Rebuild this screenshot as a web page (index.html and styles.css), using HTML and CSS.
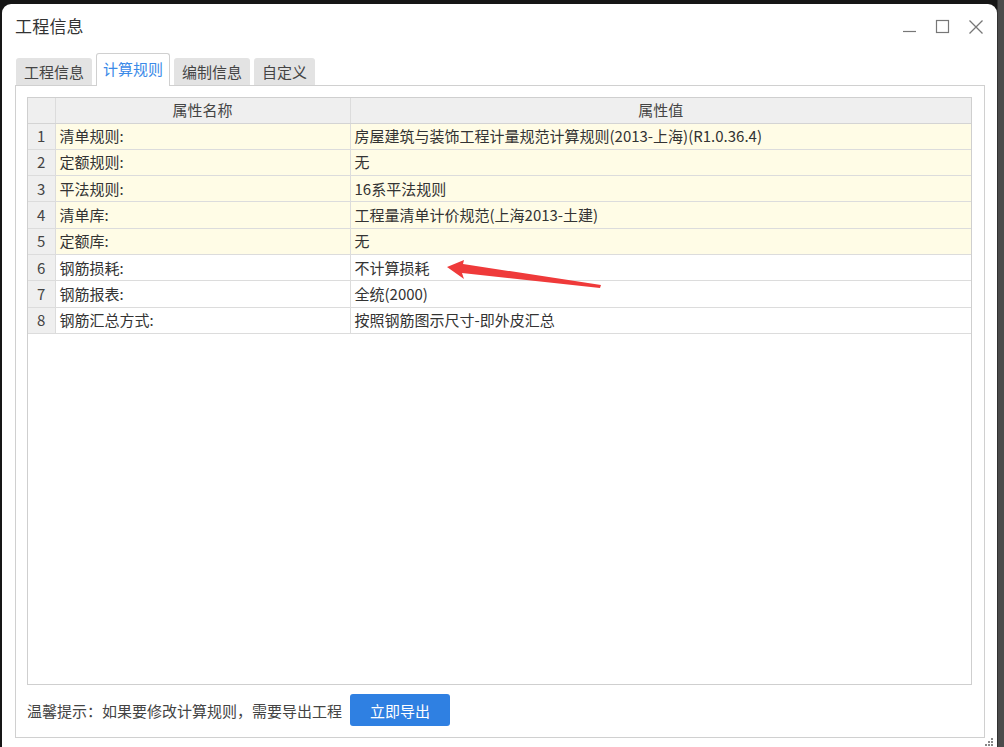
FILE: index.html
```html
<!DOCTYPE html>
<html lang="zh">
<head>
<meta charset="utf-8">
<link rel="stylesheet" href="styles.css">
</head>
<body>
<div class="window">
  <div class="titlebar">
    <div class="title">工程信息</div>
    <div class="controls">
      <svg class="ctl" width="16" height="16" viewBox="0 0 16 16"><line x1="1" y1="12.5" x2="14" y2="12.5" stroke="#777" stroke-width="1.2"/></svg>
      <svg class="ctl" width="16" height="16" viewBox="0 0 16 16"><rect x="1.5" y="1.5" width="12" height="12" fill="none" stroke="#777" stroke-width="1.2"/></svg>
      <svg class="ctl" width="16" height="16" viewBox="0 0 16 16"><path d="M1.5 1.5 L14.5 14.5 M14.5 1.5 L1.5 14.5" stroke="#777" stroke-width="1.3" fill="none"/></svg>
    </div>
  </div>
  <div class="tabs">
    <div class="tab">工程信息</div>
    <div class="tab active">计算规则</div>
    <div class="tab">编制信息</div>
    <div class="tab">自定义</div>
  </div>
  <div class="panel">
    <div class="grid">
      <table>
        <thead>
          <tr><th class="num"></th><th class="name">属性名称</th><th class="val">属性值</th></tr>
        </thead>
        <tbody>
          <tr class="y"><td class="num">1</td><td>清单规则:</td><td>房屋建筑与装饰工程计量规范计算规则(2013-上海)(R1.0.36.4)</td></tr>
          <tr class="y"><td class="num">2</td><td>定额规则:</td><td>无</td></tr>
          <tr class="y"><td class="num">3</td><td>平法规则:</td><td>16系平法规则</td></tr>
          <tr class="y"><td class="num">4</td><td>清单库:</td><td>工程量清单计价规范(上海2013-土建)</td></tr>
          <tr class="y"><td class="num">5</td><td>定额库:</td><td>无</td></tr>
          <tr><td class="num">6</td><td>钢筋损耗:</td><td>不计算损耗</td></tr>
          <tr><td class="num">7</td><td>钢筋报表:</td><td>全统(2000)</td></tr>
          <tr><td class="num">8</td><td>钢筋汇总方式:</td><td>按照钢筋图示尺寸-即外皮汇总</td></tr>
        </tbody>
      </table>
    </div>
    <div class="footer">
      <span class="hint">温馨提示：如果要修改计算规则，需要导出工程</span>
      <button class="btn">立即导出</button>
    </div>
  </div>
  <svg class="grip" width="10" height="10" viewBox="0 0 10 10">
    <rect x="7" y="1" width="2" height="2" fill="#888"/>
    <rect x="4" y="4" width="2" height="2" fill="#888"/>
    <rect x="7" y="4" width="2" height="2" fill="#888"/>
    <rect x="1" y="7" width="2" height="2" fill="#888"/>
    <rect x="4" y="7" width="2" height="2" fill="#888"/>
    <rect x="7" y="7" width="2" height="2" fill="#888"/>
  </svg>
</div>
<svg class="arrow" width="1004" height="747" viewBox="0 0 1004 747">
  <polygon points="447,267 464,260 463,264 601,285 600,288 462,273 464,279" fill="#ef3a3a"/>
</svg>
</body>
</html>
```

FILE: styles.css
```css
html, body {
  margin: 0;
  padding: 0;
}
body {
  width: 1004px;
  height: 747px;
  overflow: hidden;
  background: linear-gradient(to right, #161616 0, #161616 997px, #4b4b4b 998px, #4b4b4b 100%);
  padding: 4px 0 0 2px;
  box-sizing: border-box;
  font-family: "Noto Sans CJK SC", "Noto Sans", sans-serif;
  position: relative;
}
.window {
  width: 995px;
  height: 743px;
  background: #fff;
  border-radius: 9px 9px 0 0;
  box-sizing: border-box;
  position: relative;
}
.titlebar {
  height: 49px;
  display: flex;
  align-items: center;
  justify-content: space-between;
  padding: 0 13px 6px 13px;
  box-sizing: border-box;
}
.title {
  font-size: 17px;
  color: #333;
  letter-spacing: 0.2px;
}
.controls {
  display: flex;
  gap: 17px;
  margin-top: 2px;
}
.tabs {
  display: flex;
  align-items: flex-end;
  gap: 4px;
  padding-left: 14px;
  height: 32px;
}
.tab {
  height: 27px;
  padding: 0 8px;
  box-sizing: border-box;
  background: #e3e3e3;
  border-radius: 3px 3px 0 0;
  font-size: 15px;
  color: #444;
  line-height: 27px;
}
.tab.active {
  height: 33px;
  background: #fff;
  border: 1px solid #d0d0d0;
  border-bottom: none;
  color: #3b8ae8;
  line-height: 30px;
  margin-bottom: -1px;
  position: relative;
  z-index: 1;
  padding: 0 6px;
}
.panel {
  margin-left: 13px;
  width: 970px;
  height: 653px;
  border: 1px solid #d0d0d0;
  box-sizing: border-box;
  padding: 11px 0 0 11px;
  display: flex;
  flex-direction: column;
}
.grid {
  width: 945px;
  height: 588px;
  border: 1px solid #cfcfcf;
  box-sizing: border-box;
}
table {
  border-collapse: collapse;
  width: 943px;
  table-layout: fixed;
  font-size: 15px;
  color: #333;
}
th, td {
  border: 1px solid #dcdcdc;
  height: 25px;
  padding: 0 4px;
  box-sizing: border-box;
  white-space: nowrap;
  overflow: hidden;
  text-align: left;
  font-weight: normal;
  line-height: 24px;
}
tr:first-child th { border-top: none; }
th:first-child, td:first-child { border-left: none; }
th:last-child, td:last-child { border-right: none; }
thead th {
  background: #efefef;
  text-align: center;
  height: 25px;
  color: #444;
  border-bottom: 1px solid #d4d4d4;
}
tbody td { height: 26.3px; }
th.num { width: 27px; }
th.name { width: 295px; }
td.num {
  background: #efefef;
  text-align: center;
  color: #444;
  padding: 0;
}
tr.y td { background: #fffce6; }
tr.y td.num { background: #efefef; }
.footer {
  display: flex;
  align-items: center;
  gap: 8px;
  height: 49px;
  padding-top: 1px;
  box-sizing: border-box;
}
.hint {
  font-size: 15px;
  color: #444;
}
.btn {
  width: 100px;
  height: 32px;
  border: none;
  border-radius: 3px;
  background: #2f80e2;
  color: #fff;
  font-family: "Noto Sans CJK SC", "Noto Sans", sans-serif;
  font-size: 15px;
  padding: 0;
}
.grip {
  position: absolute;
  right: 3px;
  bottom: 0;
}
.arrow {
  position: absolute;
  left: 0;
  top: 0;
  pointer-events: none;
}
```
